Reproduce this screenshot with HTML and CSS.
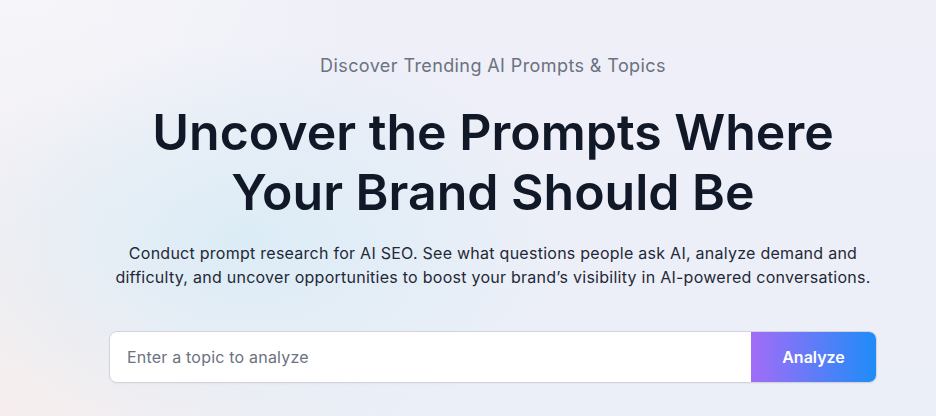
FILE: index.html
```html
<!DOCTYPE html>
<html lang="en">
<head>
  <meta charset="UTF-8">
  <meta name="viewport" content="width=device-width, initial-scale=1">
  <title>Prompt Research - Uncover the Prompts Where Your Brand Should Be</title>
  <link rel="stylesheet" href="styles.css">
</head>
<body>
  <main class="hero">
    <div class="container">
      <p class="eyebrow">Discover Trending AI Prompts &amp; Topics</p>
      <h1>Uncover the Prompts Where Your Brand Should Be</h1>
      <p class="description">
        Conduct prompt research for AI SEO. See what questions people ask AI, analyze demand and difficulty, and uncover opportunities to boost your brand’s visibility in AI-powered conversations.
      </p>

      <form class="search" onsubmit="return false">
        <input type="text" placeholder="Enter a topic to analyze">
        <button type="submit">Analyze</button>
      </form>
    </div>
  </main>
</body>
</html>
```

FILE: styles.css
```css
body {
  margin: 0;
  font-family: 'Inter', sans-serif;
  color: #111827;
  min-height: 100vh;
  background:
    radial-gradient(ellipse 320px 200px at 26% 58%, rgba(218, 236, 246, 0.95), rgba(218, 236, 246, 0)),
    radial-gradient(circle at 0% 100%, rgba(246, 238, 238, 1), rgba(246, 238, 238, 0) 40%),
    radial-gradient(circle at 0% 0%, rgba(246, 246, 250, 1), rgba(246, 246, 250, 0) 35%),
    linear-gradient(to bottom, #efeff8, #ebeff8);
}

.hero {
  padding: 0 59px 0 109px;
}

.container {
  max-width: 768px;
  margin: 0 auto;
  text-align: center;
}

.eyebrow {
  margin: 0;
  padding-top: 52px;
  font-size: 18px;
  line-height: 28px;
  letter-spacing: 0.4px;
  color: #6b7280;
}

h1 {
  max-width: 720px;
  margin: 22px auto 0;
  font-size: 50px;
  line-height: 60px;
  font-weight: 600;
  color: #111827;
}

.description {
  margin: 19px 0 0;
  font-size: 16px;
  line-height: 24px;
  letter-spacing: 0.26px;
  color: #1f2937;
}

.search {
  display: flex;
  margin-top: 42px;
  height: 50px;
  background: #fff;
  border: 1px solid #d1d5db;
  border-radius: 8px;
  overflow: hidden;
  box-shadow: 0 1px 2px rgba(0, 0, 0, 0.04);
}

.search input {
  flex: 1;
  border: none;
  outline: none;
  padding: 0 17px;
  font-family: inherit;
  font-size: 16px;
  letter-spacing: 0.2px;
  color: #111827;
  background: transparent;
}

.search input::placeholder {
  color: #6b7280;
}

.search button {
  width: 125px;
  border: none;
  background: linear-gradient(to right, #a26cf7, #1e8cf8);
  color: #fff;
  font-family: inherit;
  font-size: 16px;
  font-weight: 600;
  cursor: pointer;
}
```
